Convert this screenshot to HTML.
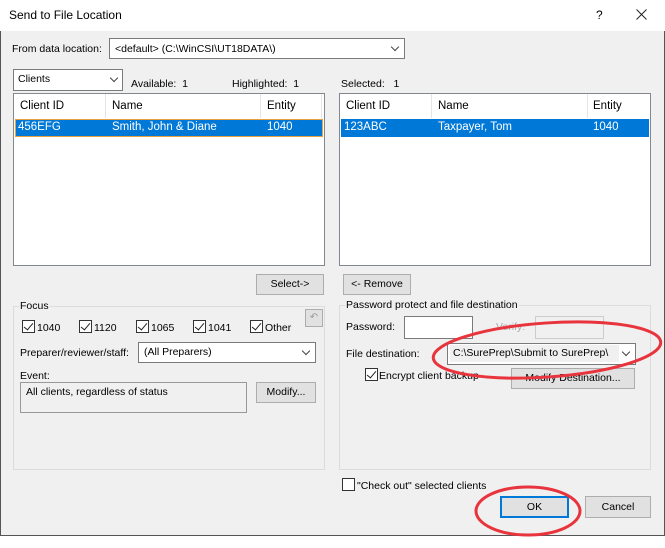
<!DOCTYPE html>
<html><head><style>
*{box-sizing:border-box;margin:0;padding:0}
body{width:665px;height:548px;background:#fff;font-family:"Liberation Sans",sans-serif;font-size:10.5px;color:#000;position:relative;overflow:hidden}
.a{position:absolute;white-space:nowrap}
.win{left:0;top:0;width:665px;height:536px;border:1px solid #555;border-top:none;background:#f0f0f0}
.title{left:0;top:0;width:665px;height:31px;background:#fff}
.box{position:absolute;background:#fff;border:1px solid #7a7a7a}
.btn{position:absolute;background:#e1e1e1;border:1px solid #adadad;text-align:center}
.grp{position:absolute;border:1px solid #dcdcdc}
.cb{position:absolute;width:13px;height:13px;border:1px solid #333;background:#fff}
.cb.on::after{content:"";position:absolute;left:3px;top:0px;width:4px;height:8px;border:solid #222;border-width:0 1.3px 1.3px 0;transform:rotate(40deg)}
.chev{position:absolute;width:6px;height:6px;border:solid #444;border-width:0 1px 1px 0;transform:rotate(45deg)}
.sel{position:absolute;background:#0078d7;color:#fff}
.hd{position:absolute;border-left:1px solid #e5e5e5;height:24px}
.L{font-size:11.5px}
</style></head><body>
<div class="a win"></div>
<div class="a title"></div>
<div class="a" style="left:9px;top:8px;font-size:12px">Send to File Location</div>
<div class="a" style="left:596px;top:8px;font-size:12px">?</div>
<svg class="a" style="left:636px;top:9px" width="11" height="11"><path d="M0.5 0.5L10.5 10.5M10.5 0.5L0.5 10.5" stroke="#222" stroke-width="1"/></svg>

<div class="a" style="left:12px;top:43px">From data location:</div>
<div class="box" style="left:109px;top:38px;width:296px;height:21px"></div>
<div class="a" style="left:115px;top:43px">&lt;default&gt; (C:\WinCSI\UT18DATA\)</div>
<div class="chev" style="left:392px;top:44px"></div>

<div class="box" style="left:13px;top:69px;width:110px;height:22px"></div>
<div class="a" style="left:18px;top:73px">Clients</div>
<div class="chev" style="left:111px;top:75px"></div>
<div class="a" style="left:131px;top:78px">Available:&nbsp;&nbsp;1</div>
<div class="a" style="left:232px;top:78px">Highlighted:&nbsp;&nbsp;1</div>
<div class="a" style="left:341px;top:78px">Selected:&nbsp;&nbsp;&nbsp;1</div>

<div class="box" style="left:13px;top:93px;width:312px;height:173px;border-color:#828790"></div>
<div class="hd" style="left:105px;top:94px"></div><div class="hd" style="left:260px;top:94px"></div><div class="hd" style="left:321px;top:94px"></div>
<div class="a L" style="left:20px;top:100px">Client ID</div>
<div class="a L" style="left:112px;top:100px">Name</div>
<div class="a L" style="left:267px;top:100px">Entity</div>
<div class="sel" style="left:15px;top:119px;width:308px;height:18px;border:1px solid #e8a040"></div>
<div class="a L" style="left:18px;top:121px;color:#fff">456EFG</div>
<div class="a L" style="left:112px;top:121px;color:#fff">Smith, John &amp; Diane</div>
<div class="a L" style="left:267px;top:121px;color:#fff">1040</div>

<div class="box" style="left:339px;top:93px;width:312px;height:173px;border-color:#828790"></div>
<div class="hd" style="left:431px;top:94px"></div><div class="hd" style="left:587px;top:94px"></div>
<div class="a L" style="left:346px;top:100px">Client ID</div>
<div class="a L" style="left:438px;top:100px">Name</div>
<div class="a L" style="left:593px;top:100px">Entity</div>
<div class="sel" style="left:341px;top:119px;width:308px;height:18px"></div>
<div class="a L" style="left:344px;top:121px;color:#fff">123ABC</div>
<div class="a L" style="left:438px;top:121px;color:#fff">Taxpayer, Tom</div>
<div class="a L" style="left:593px;top:121px;color:#fff">1040</div>

<div class="btn" style="left:256px;top:274px;width:68px;height:21px;line-height:19px">Select-&gt;</div>
<div class="btn" style="left:343px;top:274px;width:68px;height:21px;line-height:19px">&lt;- Remove</div>

<div class="grp" style="left:13px;top:306px;width:312px;height:164px"></div>
<div class="a" style="left:19px;top:300px;background:#f0f0f0;padding:0 1px">Focus</div>
<div class="btn" style="left:305px;top:309px;width:18px;height:18px;color:#999;font-size:10px;line-height:16px">↶</div>
<div class="cb on" style="left:22px;top:320px"></div><div class="a" style="left:37px;top:322px">1040</div>
<div class="cb on" style="left:79px;top:320px"></div><div class="a" style="left:94px;top:322px">1120</div>
<div class="cb on" style="left:136px;top:320px"></div><div class="a" style="left:151px;top:322px">1065</div>
<div class="cb on" style="left:193px;top:320px"></div><div class="a" style="left:208px;top:322px">1041</div>
<div class="cb on" style="left:250px;top:320px"></div><div class="a" style="left:265px;top:322px">Other</div>
<div class="a" style="left:20px;top:347px">Preparer/reviewer/staff:</div>
<div class="box" style="left:138px;top:342px;width:178px;height:21px"></div>
<div class="a" style="left:144px;top:346px">(All Preparers)</div>
<div class="chev" style="left:303px;top:348px"></div>
<div class="a" style="left:20px;top:370px">Event:</div>
<div class="box" style="left:20px;top:382px;width:227px;height:31px;background:#f0f0f0;border-color:#999"></div>
<div class="a" style="left:26px;top:386px">All clients, regardless of status</div>
<div class="btn" style="left:256px;top:382px;width:60px;height:21px;line-height:19px">Modify...</div>

<div class="grp" style="left:339px;top:305px;width:312px;height:165px"></div>
<div class="a" style="left:345px;top:299px;background:#f0f0f0;padding:0 1px">Password protect and file destination</div>
<div class="a" style="left:346px;top:321px">Password:</div>
<div class="box" style="left:404px;top:316px;width:69px;height:23px"></div>
<div class="a" style="left:496px;top:321px;color:#aaa">Verify:</div>
<div class="box" style="left:535px;top:316px;width:69px;height:23px;background:#f0f0f0;border-color:#ccc"></div>
<div class="a" style="left:346px;top:348px">File destination:</div>
<div class="box" style="left:447px;top:343px;width:189px;height:22px"></div>
<div class="a" style="left:450px;top:345px;width:169px;height:17px;background:#f0f0f0"></div>
<div class="a" style="left:453px;top:347px">C:\SurePrep\Submit to SurePrep\</div>
<div class="chev" style="left:623px;top:349px"></div>
<div class="cb on" style="left:365px;top:368px"></div><div class="a" style="left:379px;top:370px">Encrypt client backup</div>
<div class="btn" style="left:511px;top:368px;width:124px;height:21px;line-height:19px">Modify Destination...</div>

<div class="cb" style="left:342px;top:478px"></div><div class="a" style="left:357px;top:480px">"Check out" selected clients</div>
<div class="btn" style="left:500px;top:496px;width:69px;height:22px;line-height:19px;border:2px solid #0078d7">OK</div>
<div class="btn" style="left:585px;top:496px;width:66px;height:22px;line-height:20px">Cancel</div>

<svg class="a" style="left:0;top:0" width="665" height="548">
<ellipse cx="547" cy="350" rx="114" ry="27" transform="rotate(-4 547 350)" fill="none" stroke="#e8343c" stroke-width="3"/>
<ellipse cx="528" cy="511" rx="52" ry="24" fill="none" stroke="#e8343c" stroke-width="3"/>
</svg>
</body></html>
